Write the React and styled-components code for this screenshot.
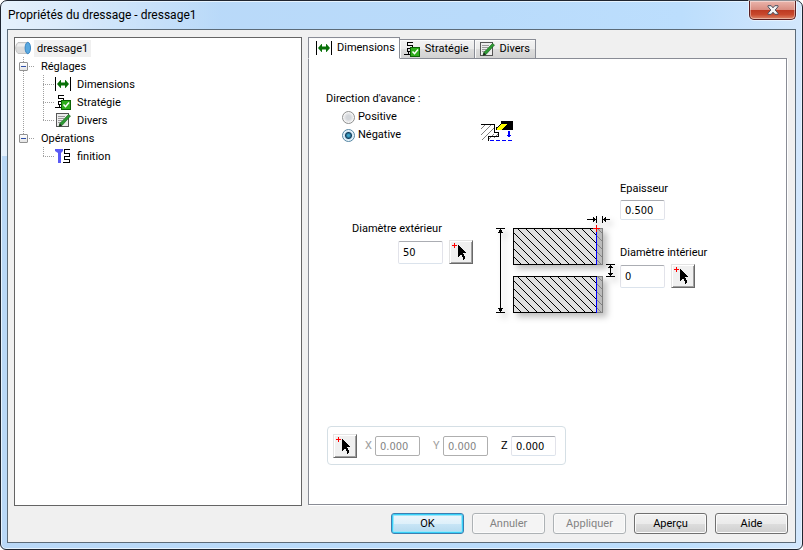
import React, { useState } from 'react'
import styled, { createGlobalStyle, css } from 'styled-components'


const GlobalStyle = createGlobalStyle`
    * {
        box-sizing: border-box;
    }
    body {
        margin: 0;
        background: #fff;
        color: #000;
        font-family: Roboto, "Liberation Sans", sans-serif;
        font-size: 11px;
        line-height: 18px;
    }
    button, input {
        font: inherit;
        color: inherit;
        margin: 0;
    }
    svg {
        display: block;
        flex: none;
    }
`

const Window = styled.div`
    display: flex;
    flex-direction: column;
    min-height: 100vh;
    padding: 0 6px 6px;
    border: 1px solid #1f2530;
    border-radius: 7px 7px 6px 6px;
    background:
        linear-gradient(90deg, rgba(255, 255, 255, 0.65), rgba(255, 255, 255, 0) 220px) 0 0 / 100% 155px no-repeat,
        linear-gradient(90deg, #b9d8f7, #b9dbfb 60%, #bcdefd 85%, #d3e7fc);
    box-shadow: inset 0 0 0 1px #e6f3fe;
`

const TitleBar = styled.header`
    display: flex;
    justify-content: space-between;
    align-items: flex-start;
    height: 28px;
`

const Title = styled.h1`
    margin: 0 0 0 1px;
    font-size: 12px;
    font-weight: 400;
    line-height: 28px;
`

const CloseButton = styled.button`
    display: flex;
    align-items: center;
    justify-content: center;
    width: 47px;
    height: 19px;
    padding: 0;
    border: 1px solid #5a1f22;
    border-top: 0;
    border-radius: 0 0 5px 5px;
    background: linear-gradient(#eab5ac, #d98e82 48%, #bd3a22 52%, #c8482d 75%, #dd8668);
    box-shadow: inset 0 0 0 1px rgba(255, 255, 255, 0.4), 0 0 0 1px rgba(255, 255, 255, 0.5);
`

const Client = styled.main`
    flex: 1;
    display: flex;
    flex-direction: column;
    gap: 7px;
    padding: 7px 7px 8px 6px;
    border: 1px solid #5c6b78;
    background: #f0f0f0;
`

const Panels = styled.div`
    flex: 1;
    display: grid;
    grid-template-columns: 288px minmax(0, 1fr);
    gap: 6px;
`

const Tree = styled.ul`
    margin: 0;
    padding: 1px 0;
    list-style: none;
    border: 1px solid #646464;
    background: #fff;

    ul {
        margin: 0;
        padding: 0;
        list-style: none;
    }
`

const TreeRow = styled.div`
    display: flex;
    align-items: center;
    height: 18px;
`

const dotsDown = 'repeating-linear-gradient(180deg, #a0a0a0 0 1px, transparent 1px 2px)'
const dotsAcross = 'repeating-linear-gradient(90deg, #a0a0a0 0 1px, transparent 1px 2px)'

const Branch = styled.span`
    display: flex;
    align-items: center;
    flex: none;
    width: 20px;
    height: 18px;
    padding-left: 4px;
    background-repeat: no-repeat;
    ${({ $line }) => $line === 'through' && css`
        background-image: ${dotsDown};
        background-size: 1px 18px;
        background-position: 8px 0;
    `}
    ${({ $line }) => $line === 'tee' && css`
        background-image: ${dotsDown}, ${dotsAcross};
        background-size: 1px 18px, 11px 1px;
        background-position: 8px 0, 8px 9px;
    `}
    ${({ $line }) => $line === 'end' && css`
        background-image: ${dotsDown}, ${dotsAcross};
        background-size: 1px 9px, 11px 1px;
        background-position: 8px 0, 8px 9px;
    `}
`

const Expander = styled.button`
    display: flex;
    align-items: center;
    justify-content: center;
    width: 9px;
    height: 9px;
    padding: 0;
    border: 1px solid #919191;
    border-radius: 1px;
    background: linear-gradient(#fff, #e4e4e4);

    &::before {
        content: "";
        width: 5px;
        height: 1px;
        background: #2f4fa8;
    }
`

const TreeLabel = styled.span`
    margin-left: 3px;
    padding: 0 3px;
    line-height: 17px;
    background: ${({ $selected }) => ($selected ? '#f0f0f0' : 'transparent')};
`

const TabArea = styled.section`
    display: flex;
    flex-direction: column;
    padding-bottom: 1px;
`

const TabList = styled.div`
    display: flex;
    align-items: flex-end;
    height: 22px;
    margin-bottom: -1px;
    z-index: 1;
`

const Tab = styled.button`
    display: flex;
    align-items: center;
    gap: 5px;
    height: 20px;
    padding: 0 5px 0 4px;
    border: 1px solid #898c95;
    border-left-width: 0;
    background: linear-gradient(#f3f3f3, #ebebeb 50%, #dddddd 52%, #d2d2d2);
    box-shadow: inset 1px 1px 0 #fbfbfb;

    ${({ $active }) => $active && css`
        height: 22px;
        padding: 0 4px 0 7px;
        border-left-width: 1px;
        border-bottom-color: #fff;
        background: #fff;
    `}
`

const Page = styled.div`
    flex: 1;
    display: flex;
    flex-direction: column;
    padding: 31px 17px 39px;
    border: 1px solid #898c95;
    margin-right: 1px;
    background: #fff;
    box-shadow: 1px 1px 0 #fff;
`

const Direction = styled.div`
    display: flex;
    align-items: flex-start;

    svg {
        margin-top: 31px;
    }
`

const RadioGroup = styled.fieldset`
    width: 155px;
    margin: 0;
    padding: 0;
    border: 0;

    legend {
        padding: 0;
    }
`

const RadioLabel = styled.label`
    display: flex;
    align-items: center;
    gap: 3px;
    height: 18px;
    padding-left: 16px;
`

const Radio = styled.input`
    appearance: none;
    width: 13px;
    height: 13px;
    border: 1px solid #8e8f8f;
    border-radius: 50%;
    background: radial-gradient(circle, #d3d6da 0 2px, #e6e7e9 4px, #f6f6f6 5px);

    &:checked {
        border-color: #5586a3;
        background: radial-gradient(circle at 50% 50%, #3ea3c9 0 1px, #14405f 3px, #cfe4f2 4px, #e9f5fc 5px);
    }
`

const Model = styled.div`
    display: flex;
    align-items: flex-start;
    margin-top: 36px;
    padding-left: 26px;
`

const OuterColumn = styled.div`
    display: flex;
    flex-direction: column;
    margin: 40px 19px 0 0;
`

const InnerColumn = styled.div`
    display: flex;
    flex-direction: column;
    gap: 24px;
`

const Part = styled.svg`
    margin-top: 29px;
    filter: drop-shadow(4px 4px 3px rgba(0, 0, 0, 0.25));
`

const Field = styled.div`
    display: flex;
    flex-direction: column;
    gap: 2px;
`

const FieldRow = styled.div`
    display: flex;
    align-items: center;
    justify-content: ${({ $end }) => ($end ? 'flex-end' : 'flex-start')};
    gap: 6px;
    padding-left: ${({ $end }) => ($end ? '46px' : '0')};
`

const NumberBox = styled.input`
    width: 45px;
    height: ${({ $tall }) => ($tall ? '23px' : '20px')};
    padding: 0 4px;
    border: 1px solid #e2e3ea;
    border-top-color: #abadb3;
    border-bottom-color: #dbe3ec;
    border-radius: 2px;
    background: #fff;
    font-family: "DejaVu Sans Condensed", "DejaVu Sans", sans-serif;

    &:disabled {
        border-color: #afafaf;
        color: #838383;
    }
`

const PickButton = styled.button`
    display: flex;
    flex: none;
    width: 24px;
    height: 24px;
    padding: 2px;
    border: 1px solid;
    border-color: #e3e3e3 #696969 #696969 #e3e3e3;
    background: #f0f0f0;
    box-shadow: inset 1px 1px 0 #fff, inset -1px -1px 0 #a0a0a0;
`

const Position = styled.div`
    display: flex;
    align-items: center;
    align-self: flex-start;
    gap: 13px;
    margin: auto 0 0 1px;
    padding: 7px 9px 6px 5px;
    border: 1px solid #d5dfe5;
    border-radius: 4px;

    ${PickButton} {
        margin-right: -5px;
    }
`

const Coord = styled.label`
    display: flex;
    align-items: center;
    color: ${({ $off }) => ($off ? '#a0a0a0' : '#000')};

    span {
        width: 10px;
    }
`

const Footer = styled.footer`
    display: flex;
    justify-content: flex-end;
    gap: 8px;
`

const PushButton = styled.button`
    width: 73px;
    height: 21px;
    padding: 0;
    border: 1px solid #707070;
    border-radius: 3px;
    background: linear-gradient(#f2f2f2, #ebebeb 50%, #dddddd 52%, #cfcfcf);
    box-shadow: inset 0 0 0 1px #fbfbfb;
    line-height: 19px;

    &:disabled {
        border-color: #adb2b5;
        background: #f4f4f4;
        color: #838383;
    }

    ${({ $primary }) => $primary && css`
        border-color: #3c7fb1;
        background: linear-gradient(#eef6fb, #def0fa 50%, #c8e5f6 52%, #b4d9ee);
        box-shadow: inset 0 0 0 1px #38d0f8, inset 0 0 0 2px #9be6fa;
    `}
`

const StockIcon = () => (
    <svg width="16" height="16" viewBox="0 0 16 16" aria-hidden="true">
        <path d="M3 2.500h10v11H3C1.500 12 .7 10 .7 8S1.500 4 3 2.500z" fill="#dcdcdc" stroke="#c4c4c4" />
        <path d="M3 3.500h9v3H1.500z" fill="#efefef" />
        <ellipse cx="12.800" cy="8" rx="2.700" ry="5.700" fill="#5aa9e0" stroke="#3c87c4" />
    </svg>
)

const DimensionsIcon = () => (
    <svg width="16" height="16" viewBox="0 0 16 16" aria-hidden="true">
        <path d="M0 1h1v14H0zM15 1h1v14h-1z" fill="#000" />
        <path d="M2 8l3.500-4H6v2.500h4V4h.5L14 8l-3.500 4H10V9.500H6V12h-.5z" fill="#087008" />
    </svg>
)

const StrategyIcon = () => (
    <svg width="16" height="16" viewBox="0 0 16 16" aria-hidden="true">
        <g fill="none" stroke="#000" shapeRendering="crispEdges">
            <path d="M9 1.500H3.500v3h5v3h-5v3h3M4.500 10.500v3M6 13.500H0" />
        </g>
        <rect x="6.500" y="6.500" width="9" height="9" fill="#2fae1c" stroke="#0d6306" />
        <path d="M8.500 10.500l2 2.200 3.500-4.200" fill="none" stroke="#fff" strokeWidth="1.500" />
    </svg>
)

const NotesIcon = () => (
    <svg width="16" height="16" viewBox="0 0 16 16" aria-hidden="true">
        <rect x="1.500" y="1.500" width="12" height="13" fill="#ececec" stroke="#555" />
        <path d="M3 4.500h7M3 6.500h6M3 8.500h4M3 10.500h3" stroke="#9a9a9a" />
        <path d="M13.500 2.500l2 1.500-8.500 9.500-3 1 .8-3z" fill="#2c9a32" stroke="#14591a" strokeWidth=".6" />
        <path d="M4 14.500l.8-3 2.200 2z" fill="#222" />
    </svg>
)

const FinishIcon = () => (
    <svg width="16" height="16" viewBox="0 0 16 16" aria-hidden="true">
        <path d="M0 1h8v2L6 5v10H3V5L0 3z" fill="#5a5af5" />
        <g fill="none" stroke="#000" shapeRendering="crispEdges">
            <path d="M15 1.500H9.500v4h5v3h-5v3h5v3H8" />
        </g>
    </svg>
)

const PickIcon = () => (
    <svg width="18" height="18" viewBox="0 0 18 18" shapeRendering="crispEdges" aria-hidden="true">
        <path d="M0 2.500h5M2.500 0v5" stroke="#f00" />
        <path d="M6 2v12l3-3 2.500 5.500 2-1L11 10h4z" fill="#000" />
    </svg>
)

const CloseIcon = () => (
    <svg width="12" height="10" viewBox="0 0 12 10" aria-hidden="true">
        <path d="M1 .7h3.200L6 2.800 7.800.7H11v1L8.200 5 11 8.300v1H7.800L6 7.200 4.200 9.300H1v-1L3.800 5 1 1.700z" fill="#f4f4f4" stroke="#4a4f5e" />
    </svg>
)

const FeedDrawing = () => (
    <svg width="33" height="21" viewBox="0 0 33 21" shapeRendering="crispEdges" aria-hidden="true">
        <path d="M0 8l4-4M0 14L10 4M1 19L13 7M7 19l6-6M5 15l8-8M13 17l4-4" stroke="#808080" />
        <path d="M0 3.500h13.500v8h4v4H7.500v4" fill="none" stroke="#000" />
        <path d="M20 0h12v8.500H20z" fill="#000" />
        <path d="M15.500 8.500V7l6-4.500h5L21 8.500z" fill="#ff0" />
        <path d="M15.500 8.500V7l6-5" fill="none" stroke="#000" />
        <path d="M28 10v5" stroke="#00f" strokeWidth="2" />
        <path d="M25 13.500h6L28 17z" fill="#00f" />
        <path d="M9 19.500h24" stroke="#00f" strokeDasharray="4 2" />
    </svg>
)

const Section = ({ y }) => (
    <g>
        <rect x="513.500" y={y + 0.5} width="83" height="36" fill="#e0e0e0" />
        <rect x="513.500" y={y + 0.5} width="83" height="36" fill="url(#hatch)" stroke="#000" />
        <rect x="597" y={y} width="6" height="37" fill="#bcbcbc" />
        <rect x="597" y={y} width="6" height="37" fill="url(#hatchSoft)" />
        <path d={`M597 ${y + 0.5}h5.500v36h-5.500`} fill="none" stroke="#808080" />
        <path d={`M596.500 ${y + 1}v36`} stroke="#00f" />
    </g>
)

const PartDrawing = () => (
    <Part width="128" height="120" viewBox="492 209 128 120" shapeRendering="crispEdges" role="img" aria-label="Pièce en coupe">
        <defs>
            <pattern id="hatch" x="517" y="228" width="8" height="8" patternUnits="userSpaceOnUse">
                <path d="M-1-1l10 10M-1 7l2 2M7-1l2 2" stroke="#000" strokeWidth="1.300" />
            </pattern>
            <pattern id="hatchSoft" x="517" y="228" width="8" height="8" patternUnits="userSpaceOnUse">
                <path d="M-1-1l10 10M-1 7l2 2M7-1l2 2" stroke="#808080" strokeWidth="1.300" />
            </pattern>
        </defs>
        <Section y={228} />
        <Section y={276} />
        <path d="M500.500 229v83M496 228.500h9M496 312.500h9" stroke="#000" />
        <path d="M500 229h1l2 4h-5zM500 312h1l2-4h-5z" fill="#000" />
        <path d="M610.500 265v11M606 264.500h9M606 276.500h9" stroke="#000" />
        <path d="M610 265h1l2 3h-5zM610 276h1l2-3h-5z" fill="#000" />
        <path d="M596.500 216v7M602.500 216v7M587 219.500h9M603 219.500h7" stroke="#000" />
        <path d="M596 219v1l-3 2v-5zM603 219v1l3 2v-5z" fill="#000" />
        <path d="M593 228.500h7M596.500 225v7" stroke="#f00" />
    </Part>
)

const tabs = [
    { name: 'Dimensions', Icon: DimensionsIcon },
    { name: 'Stratégie', Icon: StrategyIcon },
    { name: 'Divers', Icon: NotesIcon },
]

const groups = [
    { name: 'Réglages', items: tabs },
    { name: 'Opérations', items: [{ name: 'finition', Icon: FinishIcon }] },
]

const TreeGroup = ({ group, last }) => {
    const [open, setOpen] = useState(true)
    return (
        <li>
            <TreeRow>
                <Branch $line={last ? 'end' : 'tee'}>
                    <Expander aria-label={group.name} aria-expanded={open} onClick={() => setOpen(!open)} />
                </Branch>
                <TreeLabel>{group.name}</TreeLabel>
            </TreeRow>
            {open && (
                <ul>
                    {group.items.map(({ name, Icon }, i) => (
                        <li key={name}>
                            <TreeRow>
                                <Branch $line={last ? 'none' : 'through'} />
                                <Branch $line={i === group.items.length - 1 ? 'end' : 'tee'} />
                                <Icon />
                                <TreeLabel>{name}</TreeLabel>
                            </TreeRow>
                        </li>
                    ))}
                </ul>
            )}
        </li>
    )
}

const Pick = ({ label }) => (
    <PickButton type="button" aria-label={label}>
        <PickIcon />
    </PickButton>
)

const App = () => {
    const [active, setActive] = useState('Dimensions')

    return (
        <>
            <GlobalStyle />
            <Window>
                <TitleBar>
                    <Title>Propriétés du dressage - dressage1</Title>
                    <CloseButton aria-label="Fermer"><CloseIcon /></CloseButton>
                </TitleBar>
                <Client>
                    <Panels>
                        <Tree>
                            <li>
                                <TreeRow>
                                    <StockIcon />
                                    <TreeLabel $selected>dressage1</TreeLabel>
                                </TreeRow>
                                <ul>
                                    {groups.map((group, i) => (
                                        <TreeGroup key={group.name} group={group} last={i === groups.length - 1} />
                                    ))}
                                </ul>
                            </li>
                        </Tree>
                        <TabArea>
                            <TabList role="tablist">
                                {tabs.map(({ name, Icon }) => (
                                    <Tab
                                        key={name}
                                        role="tab"
                                        aria-selected={active === name}
                                        $active={active === name}
                                        onClick={() => setActive(name)}
                                    >
                                        <Icon />
                                        {name}
                                    </Tab>
                                ))}
                            </TabList>
                            <Page role="tabpanel">
                                <Direction>
                                    <RadioGroup>
                                        <legend>Direction d'avance :</legend>
                                        <RadioLabel>
                                            <Radio type="radio" name="direction" value="positive" />
                                            Positive
                                        </RadioLabel>
                                        <RadioLabel>
                                            <Radio type="radio" name="direction" value="negative" defaultChecked />
                                            Négative
                                        </RadioLabel>
                                    </RadioGroup>
                                    <FeedDrawing />
                                </Direction>
                                <Model>
                                    <OuterColumn>
                                        <Field>
                                            <label htmlFor="outer">Diamètre extérieur</label>
                                            <FieldRow $end>
                                                <NumberBox id="outer" $tall defaultValue="50" />
                                                <Pick label="Choisir le diamètre extérieur" />
                                            </FieldRow>
                                        </Field>
                                    </OuterColumn>
                                    <PartDrawing />
                                    <InnerColumn>
                                        <Field>
                                            <label htmlFor="thickness">Epaisseur</label>
                                            <NumberBox id="thickness" defaultValue="0.500" />
                                        </Field>
                                        <Field>
                                            <label htmlFor="inner">Diamètre intérieur</label>
                                            <FieldRow>
                                                <NumberBox id="inner" $tall defaultValue="0" />
                                                <Pick label="Choisir le diamètre intérieur" />
                                            </FieldRow>
                                        </Field>
                                    </InnerColumn>
                                </Model>
                                <Position>
                                    <Pick label="Choisir la position" />
                                    <Coord $off>
                                        <span>X</span>
                                        <NumberBox defaultValue="0.000" disabled />
                                    </Coord>
                                    <Coord $off>
                                        <span>Y</span>
                                        <NumberBox defaultValue="0.000" disabled />
                                    </Coord>
                                    <Coord>
                                        <span>Z</span>
                                        <NumberBox defaultValue="0.000" />
                                    </Coord>
                                </Position>
                            </Page>
                        </TabArea>
                    </Panels>
                    <Footer>
                        <PushButton $primary>OK</PushButton>
                        <PushButton disabled>Annuler</PushButton>
                        <PushButton disabled>Appliquer</PushButton>
                        <PushButton>Aperçu</PushButton>
                        <PushButton>Aide</PushButton>
                    </Footer>
                </Client>
            </Window>
        </>
    )
}

export default App
